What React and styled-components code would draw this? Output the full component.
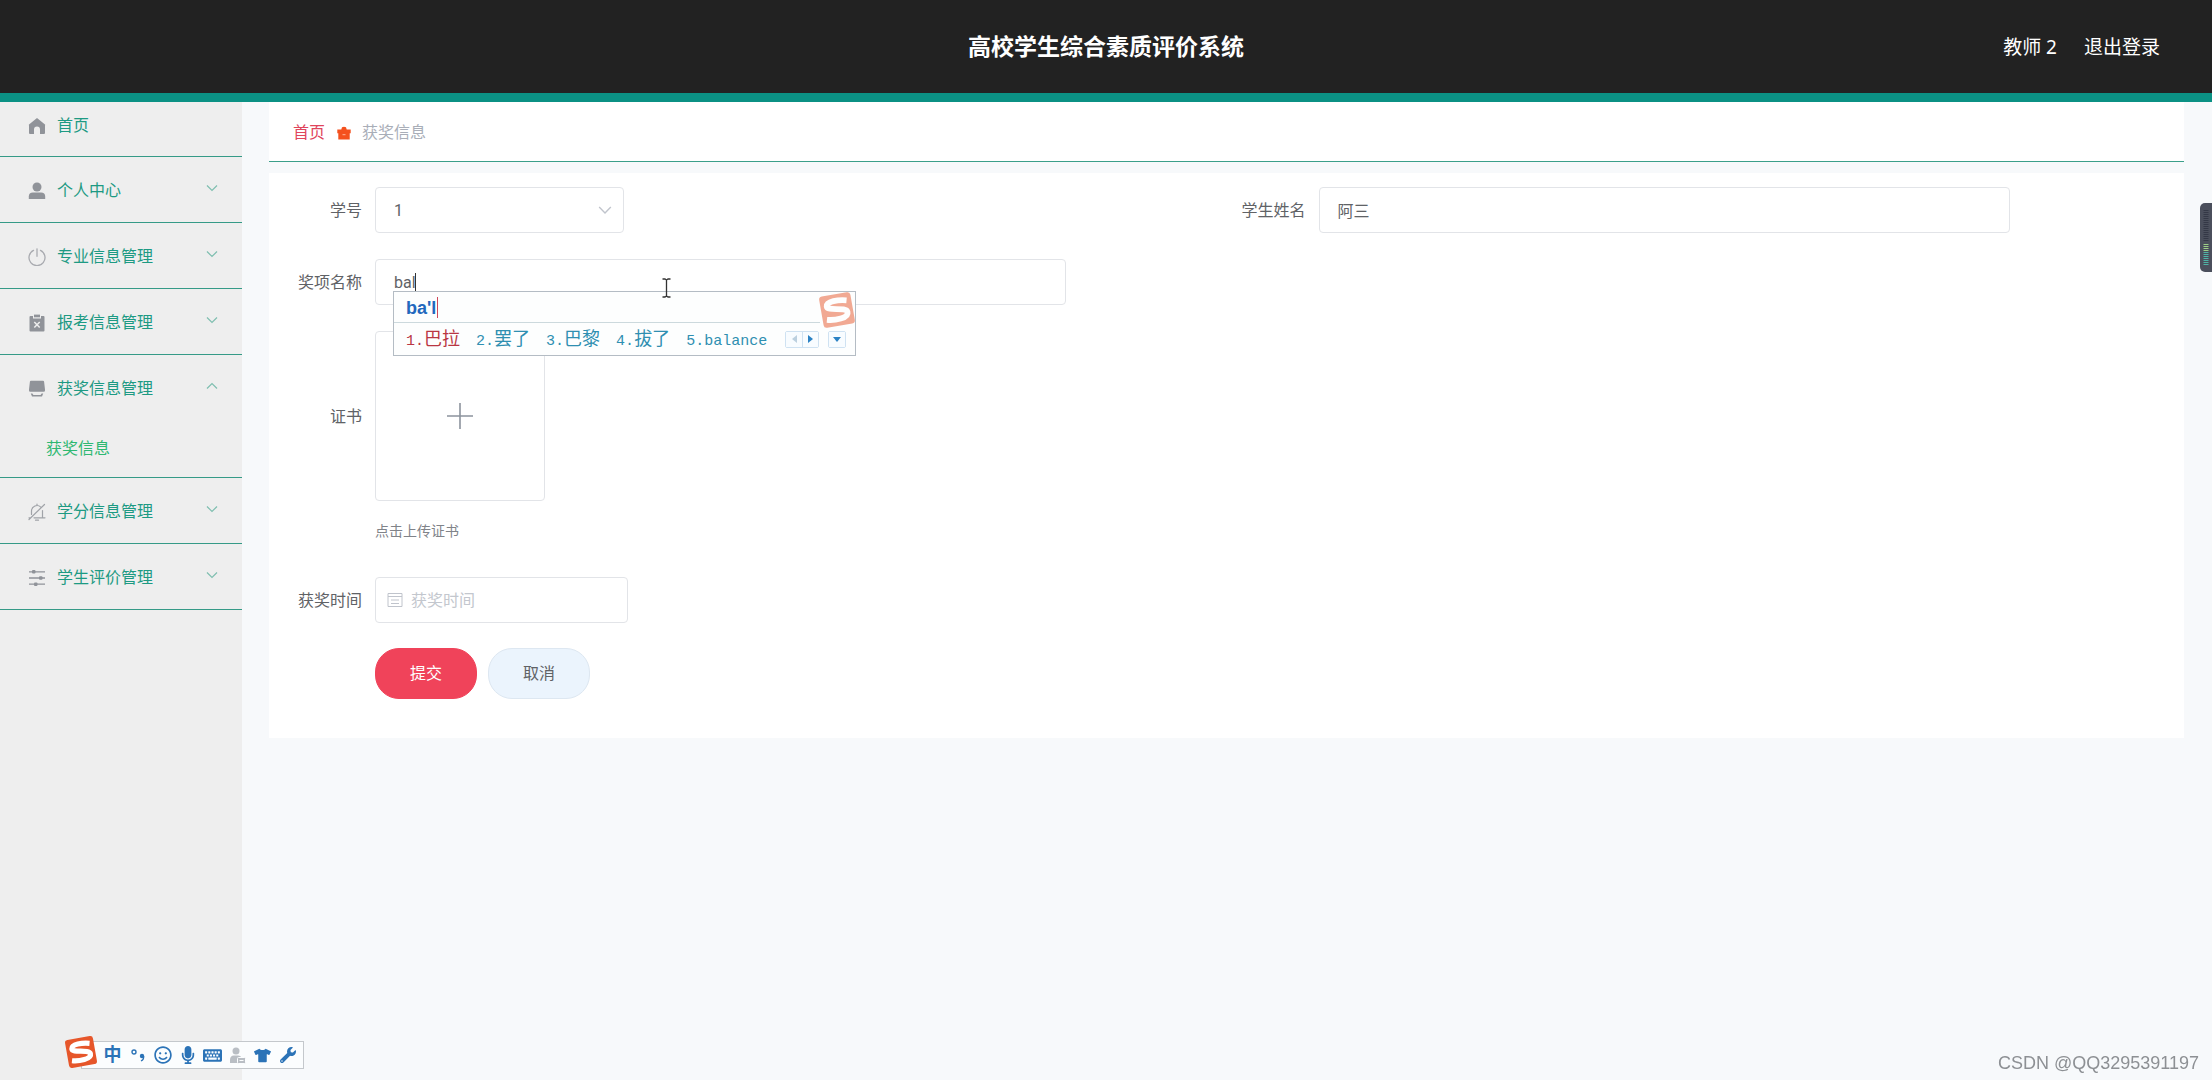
import React, { useState } from "react";
import styled, { createGlobalStyle } from "styled-components";
import {
  FaKeyboard,
  FaMicrophone,
  FaRegSmile,
  FaTshirt,
  FaWrench,
} from "react-icons/fa";

const GlobalStyle = createGlobalStyle`
  * {
    box-sizing: border-box;
  }

  body {
    margin: 0;
    background: #f7f9fb;
    color: #606266;
    font-family: Roboto, "Noto Sans CJK SC", sans-serif;
    font-size: 16px;
    line-height: 24px;
  }

  button,
  input,
  select {
    font: inherit;
  }
`;

const Page = styled.div`
  display: flex;
  flex-direction: column;
  min-height: 100vh;
`;

// 顶部栏
const Header = styled.header`
  display: grid;
  grid-template-columns: 1fr auto 1fr;
  align-items: center;
  height: 102px;
  padding-top: 3px;
  background: #222222;
  border-bottom: 9px solid #0b9184;
  color: #ffffff;
`;

const Title = styled.h1`
  grid-column: 2;
  margin: 0;
  font-size: 23px;
  line-height: 32px;
  font-weight: 700;
`;

const UserBar = styled.div`
  display: flex;
  justify-content: flex-end;
  gap: 27px;
  padding: 0 52px 2px 0;
  font-family: "Noto Sans", "Noto Sans CJK SC", sans-serif;
  font-size: 19px;
`;

const LogoutLink = styled.a`
  color: inherit;
  text-decoration: none;
`;

const Body = styled.div`
  display: flex;
  flex: 1;
`;

// 侧边菜单
const Sidebar = styled.nav`
  flex: none;
  width: 242px;
  background: #eeeeee;
`;

const MenuList = styled.ul`
  margin: 0;
  padding: 0;
  list-style: none;
`;

const MenuGroup = styled.li`
  border-bottom: 1px solid #359a87;
`;

const MenuTitle = styled.a`
  display: flex;
  align-items: center;
  height: ${(props) => (props.$home ? "54px" : "65px")};
  padding: ${(props) => (props.$home ? "0 24px 6px 28px" : "2px 24px 0 28px")};
  gap: 11px;
  color: #1d9a83;
  text-decoration: none;

  > svg {
    flex: none;
  }
`;

const MenuText = styled.span`
  flex: 1;
`;

const MenuArrow = styled.span`
  display: flex;
  padding-bottom: 5px;
`;

const SubMenuLink = styled.a`
  display: block;
  padding: 17px 0 16px 46px;
  color: #2eb872;
  text-decoration: none;
`;

// 主内容
const Main = styled.main`
  flex: 1;
  min-width: 0;
  padding: 0 28px 0 27px;
`;

const Breadcrumb = styled.nav`
  display: flex;
  align-items: center;
  height: 60px;
  padding: 3px 24px 0;
  background: #ffffff;
  border-bottom: 1px solid #3b9f8a;
`;

const HomeLink = styled.a`
  margin-right: 12px;
  color: #e0455c;
  text-decoration: none;
`;

const Current = styled.span`
  margin-left: 11px;
  color: #a9aeb8;
`;

const FormCard = styled.form`
  margin-top: 11px;
  padding: 14px 14px 39px;
  background: #ffffff;
`;

const FormRow = styled.div`
  display: grid;
  grid-template-columns: 1fr 1fr;
  margin-bottom: ${(props) => props.$gap || "26px"};
`;

const Field = styled.div`
  display: flex;
  align-items: center;
`;

const Label = styled.label`
  flex: none;
  width: 92px;
  padding: 2px 13px 0 0;
  text-align: right;
`;

const Control = styled.div`
  position: relative;
  flex: 0 1 ${(props) => props.$width};
`;

const TextInput = styled.input`
  display: block;
  width: 100%;
  height: 46px;
  padding: 0 18px;
  padding-left: ${(props) => (props.$icon ? "35px" : "18px")};
  border: 1px solid #e2e4e8;
  border-radius: 4px;
  background: #ffffff;
  color: #606266;
  outline: none;

  &::placeholder {
    color: #c3c7ce;
    opacity: 1;
  }
`;

const Select = styled.select`
  display: block;
  width: 100%;
  height: 46px;
  padding: 2px 18px 0;
  border: 1px solid #e2e4e8;
  border-radius: 4px;
  background: #ffffff;
  color: #606266;
  appearance: none;
  outline: none;
`;

const Suffix = styled.span`
  position: absolute;
  top: 0;
  right: 12px;
  display: flex;
  align-items: center;
  height: 100%;
  pointer-events: none;
`;

const Prefix = styled(Suffix)`
  right: auto;
  left: 12px;
`;

const Caret = styled.span`
  position: absolute;
  top: 14px;
  left: 40px;
  width: 1px;
  height: 18px;
  background: #333333;
`;

const UploadButton = styled.button`
  display: flex;
  align-items: center;
  justify-content: center;
  width: 170px;
  height: 170px;
  padding: 0;
  border: 1px solid #e2e4e8;
  border-radius: 4px;
  background: #ffffff;
`;

const Tip = styled.p`
  margin: 0 0 34px 92px;
  padding-top: 18px;
  color: #808389;
  font-size: 14px;
`;

const Actions = styled.div`
  display: flex;
  gap: 11px;
  padding-left: 92px;
`;

const ActionButton = styled.button`
  width: 102px;
  height: 51px;
  padding: 0;
  border: 1px solid ${(props) => (props.$primary ? "#f0435a" : "#dde7f1")};
  border-radius: 24px;
  background: ${(props) => (props.$primary ? "#f0435a" : "#ebf4fd")};
  color: ${(props) => (props.$primary ? "#ffffff" : "#606266")};
`;

// 输入法候选框
const ImePanel = styled.div`
  position: absolute;
  z-index: 2;
  top: 32px;
  left: 18px;
  width: 463px;
  border: 1px solid #b4bcc4;
  background: #fdfefe;
`;

const ImeInput = styled.div`
  display: flex;
  align-items: center;
  height: 31px;
  margin-right: 35px;
  padding: 1px 0 0 12px;
  border-bottom: 1px solid #ccd9dd;
  color: #2268bd;
  font-family: "Liberation Sans", sans-serif;
  font-size: 18px;
  font-weight: 700;
`;

const ImeCaret = styled.span`
  width: 1px;
  height: 21px;
  margin-left: 1px;
  background: #d0475a;
`;

const ImeRow = styled.div`
  display: flex;
  align-items: center;
  height: 32px;
  padding: 0 9px 0 12px;
`;

const Candidates = styled.ol`
  display: flex;
  align-items: baseline;
  flex: 1;
  gap: 16px;
  margin: 0;
  padding: 3px 0 0;
  list-style: none;
`;

const Candidate = styled.li`
  color: ${(props) => (props.$active ? "#b93643" : "#2f8fb1")};
  font-family: "Liberation Mono", "Noto Sans CJK SC", monospace;
  font-size: 15px;
  white-space: nowrap;
`;

const Hanzi = styled.span`
  font-size: 18px;
`;

const Pager = styled.div`
  display: flex;
  margin-right: ${(props) => (props.$last ? "0" : "9px")};
  border: 1px solid #cfe2f2;
  border-radius: 2px;
`;

const PagerButton = styled.button`
  display: flex;
  align-items: center;
  justify-content: center;
  width: 16px;
  height: 15px;
  padding: 0;
  border: 0;
  background: #f8fcff;

  & + & {
    border-left: 1px solid #cfe2f2;
  }
`;

const ImeLogo = styled.div`
  position: absolute;
  top: -1px;
  right: -1px;
  display: flex;
  opacity: 0.5;
`;

const Pointer = styled.svg`
  position: absolute;
  z-index: 3;
  top: 19px;
  left: 287px;
`;

// 悬浮的输入法工具条
const ImeBar = styled.div`
  position: fixed;
  bottom: 11px;
  left: 64px;
  display: flex;
  align-items: flex-end;
`;

const ImeTools = styled.div`
  display: flex;
  align-items: center;
  width: 223px;
  height: 28px;
  margin-left: -17px;
  padding-left: 18px;
  border: 1px solid #c4c8cc;
  background: #fbfdfe;
  color: #2b73b7;
`;

const Tool = styled.span`
  display: flex;
  justify-content: center;
  width: 25px;
  font-size: 18px;
  font-weight: 700;
`;

const LogoLayer = styled.div`
  z-index: 1;
  display: flex;
`;

const SideWidget = styled.div`
  position: fixed;
  top: 203px;
  right: 0;
  display: flex;
  justify-content: center;
  width: 12px;
  height: 69px;
  padding-top: 7px;
  border-radius: 5px 0 0 5px;
  background: #4b4f5c;
`;

const Watermark = styled.div`
  position: fixed;
  right: 13px;
  bottom: 5px;
  color: #8d9094;
  font-family: "Liberation Sans", sans-serif;
  font-size: 18px;
`;

const Chevron = ({ up, color = "#7fbfb0", size = 12 }) => (
  <svg width={size} height={size} viewBox="0 0 12 12" fill="none" aria-hidden="true">
    <path
      d={up ? "M1 8.500 6 3.500 11 8.500" : "M1 3.500 6 8.500 11 3.500"}
      stroke={color}
      strokeWidth="1.2"
    />
  </svg>
);

const MenuIcon = ({ children }) => (
  <svg width="18" height="18" viewBox="0 0 18 18" fill="#909399" aria-hidden="true">
    {children}
  </svg>
);

const icons = {
  home: <path d="M9 1 17 7.500Q17.400 8 17 8.600V16a1 1 0 0 1-1 1h-4v-4.500a3 3 0 0 0-6 0V17H2a1 1 0 0 1-1-1V8.600Q.6 8 1 7.500Z" />,
  user: (
    <>
      <circle cx="9" cy="5" r="4.500" />
      <path d="M.8 17v-2.500q0-4 4.200-4h8q4.200 0 4.200 4V17Z" />
    </>
  ),
  power: (
    <g fill="none" stroke="#a9abb0" strokeWidth="1.300" strokeLinecap="round">
      <path d="M5.500 2.400a8 8 0 1 0 7 0" />
      <path d="M9 .8v7.500" />
    </g>
  ),
  release: (
    <>
      <path d="M2.500 2H5v2.500h8V2h2.500q1 0 1 1v13.500q0 1-1 1h-13q-1 0-1-1V3q0-1 1-1Z" />
      <path d="M6 .6h6v2.700H6Z" />
      <path d="m6.300 8 5.400 5.600M11.700 8l-5.400 5.600" stroke="#eeeeee" strokeWidth="1.500" />
    </>
  ),
  award: (
    <>
      <path d="M3 .8h12q1 0 1.100 1L17 9.500v1q0 1.300-1.300 1.300H2.300Q1 11.800 1 10.500v-1L1.900 1.800Q2 .8 3 .8Z" />
      <path d="M2.800 13.500h1.600l1 1.500h7.200l1-1.500h1.600l-1.200 3H4Z" />
    </>
  ),
  bell: (
    <g fill="none" stroke="#a0a3a8" strokeWidth="1.200" strokeLinecap="round">
      <path d="M3.500 11.500V8a5.500 5.500 0 0 1 9.300-3.900M14.500 7.500v7.200M6 14.800h11M1 16.500 16.500 1.500M1 14.800h1.500M7.500 17.200h3M9 1v1.500" />
    </g>
  ),
  operation: (
    <>
      <path d="M1 2.800h16M1 9h16M1 15.200h16" stroke="#909399" strokeWidth="1.300" />
      <rect x="4" y="1" width="3.500" height="3.500" rx="1" />
      <rect x="11" y="7.300" width="3.500" height="3.500" rx="1" />
      <rect x="6" y="13.500" width="3.500" height="3.500" rx="1" />
    </>
  ),
};

const menus = [
  { name: "首页", icon: "home" },
  { name: "个人中心", icon: "user", arrow: true },
  { name: "专业信息管理", icon: "power", arrow: true },
  { name: "报考信息管理", icon: "release", arrow: true },
  { name: "获奖信息管理", icon: "award", arrow: true, children: ["获奖信息"] },
  { name: "学分信息管理", icon: "bell", arrow: true },
  { name: "学生评价管理", icon: "operation", arrow: true },
];

const candidates = ["巴拉", "罢了", "巴黎", "拔了", "balance"];

const SogouLogo = ({ size }) => (
  <svg width={size} height={size} viewBox="0 0 36 36" aria-hidden="true">
    <g transform="rotate(-10 18 18)">
      <rect x="3" y="3" width="30" height="30" rx="3" fill="#e6562a" />
      <path
        d="M28.500 10.500C21 8.500 9.500 8 9 13c-.5 5 18 3 18.500 8.500C28 27.500 14 27.500 7 25.500"
        fill="none"
        stroke="#ffffff"
        strokeWidth="5.500"
      />
    </g>
  </svg>
);

const ImeCandidates = () => (
  <ImePanel>
    <ImeInput>
      ba'l
      <ImeCaret />
    </ImeInput>
    <ImeRow>
      <Candidates>
        {candidates.map((word, i) => (
          <Candidate key={word} $active={i === 0}>
            {i + 1}.{word === "balance" ? word : <Hanzi>{word}</Hanzi>}
          </Candidate>
        ))}
      </Candidates>
      <Pager>
        <PagerButton type="button" aria-label="上一页">
          <svg width="5" height="8" viewBox="0 0 5 8">
            <path d="M5 0v8L0 4Z" fill="#bcd0df" />
          </svg>
        </PagerButton>
        <PagerButton type="button" aria-label="下一页">
          <svg width="5" height="8" viewBox="0 0 5 8">
            <path d="M0 0v8l5-4Z" fill="#2b82c4" />
          </svg>
        </PagerButton>
      </Pager>
      <Pager $last>
        <PagerButton type="button" aria-label="更多">
          <svg width="8" height="5" viewBox="0 0 8 5">
            <path d="M0 0h8L4 5Z" fill="#2b82c4" />
          </svg>
        </PagerButton>
      </Pager>
    </ImeRow>
    <ImeLogo>
      <SogouLogo size={38} />
    </ImeLogo>
  </ImePanel>
);

const App = () => {
  const [number, setNumber] = useState("1");
  const [student, setStudent] = useState("阿三");
  const [award, setAward] = useState("bal");
  const [time, setTime] = useState("");

  const handleSubmit = (e) => {
    e.preventDefault();
  };

  return (
    <Page>
      <GlobalStyle />
      <Header>
        <Title>高校学生综合素质评价系统</Title>
        <UserBar>
          <span>教师 2</span>
          <LogoutLink href="#logout">退出登录</LogoutLink>
        </UserBar>
      </Header>

      <Body>
        <Sidebar>
          <MenuList>
            {menus.map((menu) => (
              <MenuGroup key={menu.name}>
                <MenuTitle href="#menu" $home={menu.icon === "home"}>
                  <MenuIcon>{icons[menu.icon]}</MenuIcon>
                  <MenuText>{menu.name}</MenuText>
                  {menu.arrow && (
                    <MenuArrow>
                      <Chevron up={Boolean(menu.children)} />
                    </MenuArrow>
                  )}
                </MenuTitle>
                {menu.children?.map((child) => (
                  <SubMenuLink key={child} href="#award">
                    {child}
                  </SubMenuLink>
                ))}
              </MenuGroup>
            ))}
          </MenuList>
        </Sidebar>

        <Main>
          <Breadcrumb>
            <HomeLink href="#home">首页</HomeLink>
            <svg width="14" height="14" viewBox="0 0 14 14" fill="#f4511e" aria-hidden="true">
              <path d="M.3 3.500h4L5 1.200q2-1 4 0l.7 2.300h4v3.800H.3Z" />
              <path d="M1.300 6.500h11.400v7H1.300Z" />
              <path d="M5.500 8.700h3" stroke="#ffb59b" />
            </svg>
            <Current>获奖信息</Current>
          </Breadcrumb>

          <FormCard onSubmit={handleSubmit}>
            <FormRow>
              <Field>
                <Label htmlFor="number">学号</Label>
                <Control $width="249px">
                  <Select id="number" value={number} onChange={(e) => setNumber(e.target.value)}>
                    <option value="1">1</option>
                  </Select>
                  <Suffix>
                    <Chevron color="#c0c4cc" size={14} />
                  </Suffix>
                </Control>
              </Field>
              <Field>
                <Label htmlFor="student">学生姓名</Label>
                <Control $width="691px">
                  <TextInput id="student" value={student} onChange={(e) => setStudent(e.target.value)} />
                </Control>
              </Field>
            </FormRow>

            <FormRow>
              <Field>
                <Label htmlFor="award">奖项名称</Label>
                <Control $width="691px">
                  <TextInput id="award" value={award} onChange={(e) => setAward(e.target.value)} />
                  <Caret />
                  <ImeCandidates />
                  {/* 鼠标光标 */}
                  <Pointer width="9" height="20" viewBox="0 0 9 20" fill="none" stroke="#333333">
                    <path d="M.5 1H3l1.500 1L6 1h2.500M4.500 2v16M.5 19H3l1.500-1L6 19h2.500" strokeWidth="1.300" />
                  </Pointer>
                </Control>
              </Field>
            </FormRow>

            <FormRow $gap="0">
              <Field>
                <Label htmlFor="certificate">证书</Label>
                <UploadButton id="certificate" type="button" aria-label="上传证书">
                  <svg width="26" height="26" viewBox="0 0 26 26" aria-hidden="true">
                    <path d="M13 0v26M0 13h26" stroke="#8c939d" strokeWidth="1.600" />
                  </svg>
                </UploadButton>
              </Field>
            </FormRow>
            <Tip>点击上传证书</Tip>

            <FormRow $gap="25px">
              <Field>
                <Label htmlFor="time">获奖时间</Label>
                <Control $width="253px">
                  <TextInput
                    id="time"
                    $icon
                    placeholder="获奖时间"
                    value={time}
                    onChange={(e) => setTime(e.target.value)}
                  />
                  <Prefix>
                    <svg width="16" height="16" viewBox="0 0 16 16" fill="none" stroke="#c0c4cc" aria-hidden="true">
                      <path d="M1 1.500h14v13H1ZM1 4.500h14M4 8h8M4 11.500h8" />
                    </svg>
                  </Prefix>
                </Control>
              </Field>
            </FormRow>

            <Actions>
              <ActionButton type="submit" $primary>
                提交
              </ActionButton>
              <ActionButton type="button">取消</ActionButton>
            </Actions>
          </FormCard>
        </Main>
      </Body>

      <SideWidget>
        <svg width="6" height="56" viewBox="0 0 6 56" aria-hidden="true">
          <path d="M3 0v32" stroke="#343846" strokeWidth="5" strokeDasharray="1 1" />
          <path d="M3 34v8" stroke="#9ccf86" strokeWidth="5" strokeDasharray="1 1" />
          <path d="M3 42v13" stroke="#4fb3a5" strokeWidth="5" strokeDasharray="1 1" />
        </svg>
      </SideWidget>

      <ImeBar>
        <LogoLayer>
          <SogouLogo size={34} />
        </LogoLayer>
        <ImeTools>
          <Tool>中</Tool>
          <Tool>
            <svg width="14" height="14" viewBox="0 0 14 14" aria-hidden="true">
              <circle cx="3" cy="4" r="2" fill="none" stroke="#2b73b7" strokeWidth="1.400" />
              <circle cx="11" cy="8" r="2.200" fill="#2b73b7" />
              <path d="M12.700 8q.3 3.500-2.700 5" fill="none" stroke="#2b73b7" strokeWidth="1.300" />
            </svg>
          </Tool>
          <Tool>
            <FaRegSmile size={18} />
          </Tool>
          <Tool>
            <FaMicrophone size={18} />
          </Tool>
          <Tool>
            <FaKeyboard size={19} />
          </Tool>
          <Tool>
            <svg width="17" height="17" viewBox="0 0 17 17" fill="#b9bec4" aria-hidden="true">
              <circle cx="7" cy="4" r="3.500" />
              <path d="M1 16v-3q0-4.500 4-4.500h4q3 0 3.500 2.500V16Z" />
              <rect x="8.500" y="10.500" width="8" height="6" rx="1" stroke="#fbfdfe" />
              <path d="M10.500 13.500h4" stroke="#fbfdfe" />
            </svg>
          </Tool>
          <Tool>
            <FaTshirt size={17} />
          </Tool>
          <Tool>
            <FaWrench size={16} />
          </Tool>
        </ImeTools>
      </ImeBar>

      <Watermark>CSDN @QQ3295391197</Watermark>
    </Page>
  );
};

export default App;
